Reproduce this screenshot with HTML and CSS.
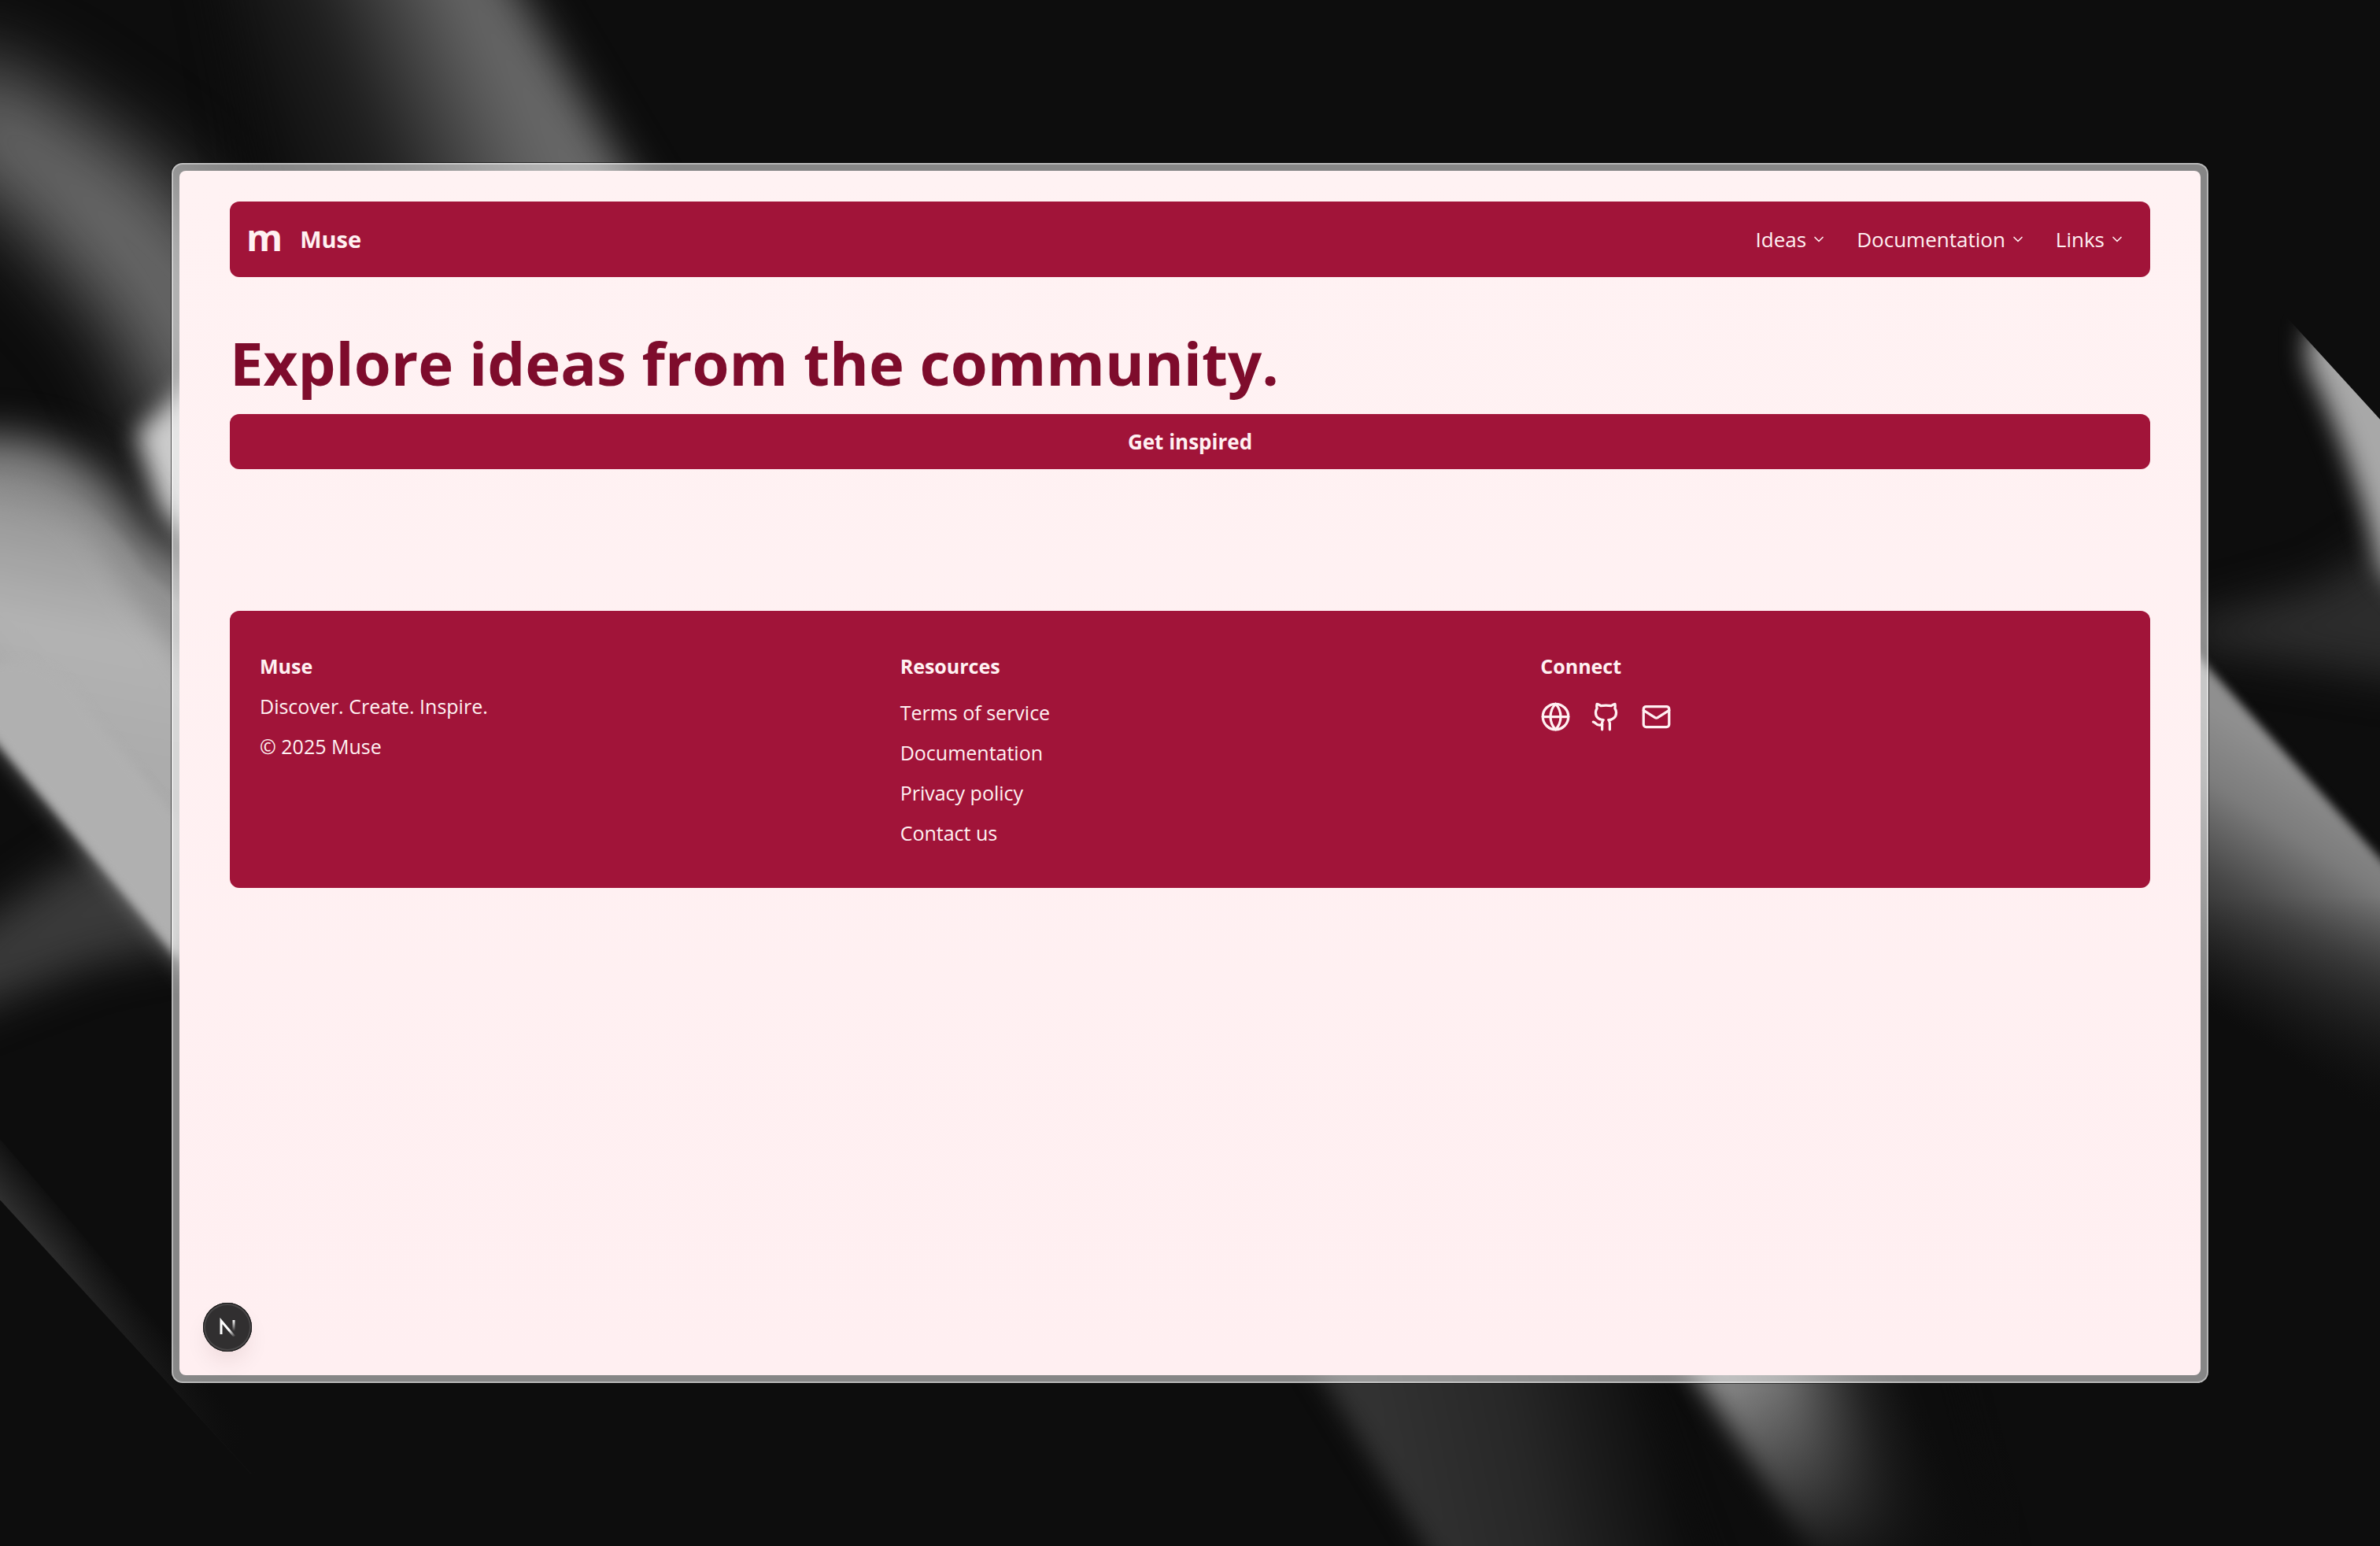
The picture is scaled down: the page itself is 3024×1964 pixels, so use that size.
FILE: index.html
```html
<!DOCTYPE html>
<html lang="en">
<head>
<meta charset="utf-8">
<meta name="viewport" content="width=device-width, initial-scale=1">
<title>Muse</title>
<link rel="stylesheet" href="styles.css">
</head>
<body>
<svg class="backdrop" viewBox="0 0 1568 1018" preserveAspectRatio="none" aria-hidden="true">
  <defs>
    <filter id="b3" x="-50%" y="-50%" width="200%" height="200%" color-interpolation-filters="sRGB"><feGaussianBlur stdDeviation="3"/></filter>
    <filter id="b8" x="-50%" y="-50%" width="200%" height="200%" color-interpolation-filters="sRGB"><feGaussianBlur stdDeviation="8"/></filter>
    <filter id="b14" x="-80%" y="-80%" width="260%" height="260%" color-interpolation-filters="sRGB"><feGaussianBlur stdDeviation="14"/></filter>
    <filter id="b26" x="-80%" y="-80%" width="260%" height="260%" color-interpolation-filters="sRGB"><feGaussianBlur stdDeviation="26"/></filter>
    <clipPath id="rightEdge"><path d="M1495 196 1503 205 1620 333V460H1440V196Z"/></clipPath>
    <linearGradient id="beamB" gradientUnits="userSpaceOnUse" x1="175" y1="110" x2="370" y2="30">
      <stop offset="0" stop-color="#0d0d0d"/><stop offset=".35" stop-color="#202020"/><stop offset=".75" stop-color="#606060"/><stop offset="1" stop-color="#6e6e6e"/>
    </linearGradient>
    <linearGradient id="beamC" gradientUnits="userSpaceOnUse" x1="60" y1="290" x2="0" y2="600">
      <stop offset="0" stop-color="#6a6a6a"/><stop offset=".2" stop-color="#a0a0a0"/><stop offset=".4" stop-color="#bababa"/><stop offset="1" stop-color="#a8a8a8"/>
    </linearGradient>
    <linearGradient id="edgeD" gradientUnits="userSpaceOnUse" x1="40" y1="838" x2="62" y2="820">
      <stop offset="0" stop-color="#2e2e2e"/><stop offset="1" stop-color="#0d0d0d"/>
    </linearGradient>
    <linearGradient id="fadeD" gradientUnits="userSpaceOnUse" x1="30" y1="830" x2="150" y2="960">
      <stop offset="0" stop-color="#0d0d0d" stop-opacity="0"/><stop offset="1" stop-color="#0d0d0d"/>
    </linearGradient>
    <linearGradient id="beamR" gradientUnits="userSpaceOnUse" x1="1510" y1="500" x2="1420" y2="640">
      <stop offset="0" stop-color="#8f8f8f"/><stop offset=".25" stop-color="#7c7c7c"/><stop offset=".55" stop-color="#484848"/><stop offset=".85" stop-color="#202020"/><stop offset="1" stop-color="#0d0d0d"/>
    </linearGradient>
    <linearGradient id="fadeR" gradientUnits="userSpaceOnUse" x1="0" y1="590" x2="0" y2="750">
      <stop offset="0" stop-color="#0d0d0d" stop-opacity="0"/><stop offset="1" stop-color="#0d0d0d"/>
    </linearGradient>
    <linearGradient id="beamF" gradientUnits="userSpaceOnUse" x1="910" y1="980" x2="1100" y2="940">
      <stop offset="0" stop-color="#333"/><stop offset=".5" stop-color="#272727"/><stop offset="1" stop-color="#0d0d0d"/>
    </linearGradient>
    <linearGradient id="beamG" gradientUnits="userSpaceOnUse" x1="1140" y1="935" x2="1250" y2="895">
      <stop offset="0" stop-color="#868686"/><stop offset=".35" stop-color="#6c6c6c"/><stop offset=".75" stop-color="#222"/><stop offset="1" stop-color="#0d0d0d"/>
    </linearGradient>
    <linearGradient id="fadeG" gradientUnits="userSpaceOnUse" x1="0" y1="915" x2="0" y2="1018">
      <stop offset="0" stop-color="#0d0d0d" stop-opacity="0"/><stop offset="1" stop-color="#0d0d0d" stop-opacity=".85"/>
    </linearGradient>
  </defs>
  <rect width="1568" height="1018" fill="#0d0d0d"/>
  <path d="M-40 30 20 55 100 110 170 190V340L120 310 75 215 0 130-40 110Z" fill="#696969" filter="url(#b26)"/>
  <path d="M135-60H308L440 160H175Z" fill="url(#beamB)" filter="url(#b14)"/>
  <path d="M90 285 150 230V390L105 335Z" fill="#ccc" filter="url(#b8)"/>
  <path d="M-30 620 60 560 160 560V615L60 635-30 670Z" fill="#3a3a3a" filter="url(#b14)"/>
  <path d="M-40 292Q50 272 95 350L180 400V640L118 580-40 400Z" fill="#848484" filter="url(#b14)"/>
  <path d="M-40 320Q50 300 95 375L160 430V682L118 631-40 442Z" fill="url(#beamC)" filter="url(#b3)" opacity=".35"/>
  <path d="M-60 335Q30 290 80 385L170 500V694L118 631-60 418Z" fill="url(#beamC)" filter="url(#b8)" opacity=".8"/>
  <path d="M-60 470Q20 400 60 470L118 540V631L-60 418Z" fill="#b0b0b0" filter="url(#b3)"/>
  <path d="M0 750V790L165 970 185 965Z" fill="url(#edgeD)"/>
  <path d="M0 740V790L165 970 200 965Z" fill="url(#fadeD)"/>
  <path d="M1440 410 1530 385 1600 340V450L1440 425Z" fill="#2c2c2c" filter="url(#b14)"/>
  <g clip-path="url(#rightEdge)">
    <path d="M1520 215 1600 230V410L1568 375Q1550 300 1520 240Z" fill="#a8a8a8" filter="url(#b8)"/>
  </g>
  <path d="M1400 378 1450 434 1620 623V780H1400Z" fill="url(#beamR)" filter="url(#b3)"/>
  <path d="M1400 560H1568V800H1400Z" fill="url(#fadeR)"/>
  <path d="M1093 870 1217 1060H1330L1280 870Z" fill="url(#beamG)" filter="url(#b8)"/>
  <path d="M1090 905H1330V1018H1090Z" fill="url(#fadeG)"/>
  <path d="M848 870 965 1060H1140L1070 870Z" fill="url(#beamF)" filter="url(#b8)"/>
</svg>

<div class="window">
  <div class="page">
    <header class="topbar">
      <a class="brand" href="#">
        <span class="brand-mark" aria-hidden="true">m</span>
        <span class="brand-name">Muse</span>
      </a>
      <nav class="menu" aria-label="Main">
        <button class="menu-item" type="button">Ideas
          <svg class="chevron" viewBox="0 0 24 24" aria-hidden="true"><path d="m6 9 6 6 6-6"/></svg></button>
        <button class="menu-item" type="button">Documentation
          <svg class="chevron" viewBox="0 0 24 24" aria-hidden="true"><path d="m6 9 6 6 6-6"/></svg></button>
        <button class="menu-item" type="button">Links
          <svg class="chevron" viewBox="0 0 24 24" aria-hidden="true"><path d="m6 9 6 6 6-6"/></svg></button>
      </nav>
    </header>

    <main class="hero">
      <h1 class="hero-title">Explore ideas from the community.</h1>
      <button class="cta" type="button">Get inspired</button>
    </main>

    <footer class="footer">
      <section class="footer-col">
        <h2 class="footer-title">Muse</h2>
        <p>Discover. Create. Inspire.</p>
        <p>© 2025 Muse</p>
      </section>
      <section class="footer-col">
        <h2 class="footer-title">Resources</h2>
        <ul class="footer-links">
          <li><a href="#">Terms of service</a></li>
          <li><a href="#">Documentation</a></li>
          <li><a href="#">Privacy policy</a></li>
          <li><a href="#">Contact us</a></li>
        </ul>
      </section>
      <section class="footer-col">
        <h2 class="footer-title">Connect</h2>
        <div class="socials">
          <a href="#" aria-label="Website"><svg class="icon" viewBox="0 0 24 24"><circle cx="12" cy="12" r="10"/><path d="M12 2a14.5 14.5 0 0 0 0 20 14.5 14.5 0 0 0 0-20"/><path d="M2 12h20"/></svg></a>
          <a href="#" aria-label="GitHub"><svg class="icon" viewBox="0 0 24 24"><path d="M15 22v-4a4.8 4.8 0 0 0-1-3.5c3 0 6-2 6-5.5.08-1.25-.27-2.48-1-3.5.28-1.15.28-2.35 0-3.5 0 0-1 0-3 1.5-2.64-.5-5.36-.5-8 0C6 2 5 2 5 2c-.3 1.15-.3 2.35 0 3.5A5.403 5.403 0 0 0 4 9c0 3.5 3 5.5 6 5.5-.39.49-.68 1.05-.85 1.65-.17.6-.22 1.23-.15 1.85v4"/><path d="M9 18c-4.51 2-5-2-7-2"/></svg></a>
          <a href="#" aria-label="Email"><svg class="icon" viewBox="0 0 24 24"><rect width="20" height="16" x="2" y="4" rx="2"/><path d="m22 7-8.97 5.7a1.94 1.94 0 0 1-2.06 0L2 7"/></svg></a>
        </div>
      </section>
    </footer>

    <button class="dev-badge" type="button" aria-label="Open developer tools">
      <svg class="dev-logo" viewBox="0 0 24 24" fill="none" aria-hidden="true">
        <defs>
          <linearGradient id="nDiag" gradientUnits="userSpaceOnUse" x1="15" y1="15" x2="22" y2="24"><stop stop-color="#fff"/><stop offset="1" stop-color="#fff" stop-opacity="0"/></linearGradient>
          <linearGradient id="nStem" gradientUnits="userSpaceOnUse" x1="0" y1="3" x2="0" y2="17"><stop stop-color="#fff"/><stop offset="1" stop-color="#fff" stop-opacity="0"/></linearGradient>
        </defs>
        <path d="M4 21V4L21 24" stroke="url(#nDiag)" stroke-width="3"/>
        <path d="M20 3V17" stroke="url(#nStem)" stroke-width="3"/>
      </svg>
    </button>
  </div>
</div>
</body>
</html>
```
FILE: styles.css
```css
:root {
  --rose-50: #fff1f2;
  --rose-800: #a11439;
  --rose-900: #7e0c2c;
  --text: 26px;
  --text-small: 25px;
  --line: 38px;
}

* {
  box-sizing: border-box;
}

body {
  margin: 0;
  min-height: 100vh;
  display: flex;
  padding: 207px 218px;
  background: #0d0d0d;
  color: var(--rose-50);
  font-family: "Open Sans", "Noto Sans", sans-serif;
  font-size: var(--text);
  line-height: var(--line);
}

h1,
h2,
p,
ul {
  margin: 0;
}

a {
  color: inherit;
  text-decoration: none;
}

button {
  border: 0;
  color: inherit;
  font: inherit;
  cursor: pointer;
}

.backdrop {
  position: fixed;
  inset: 0;
  z-index: -1;
  width: 100%;
  height: 100%;
}

/* Translucent frame round the page */
.window {
  flex: 1;
  display: flex;
  padding: 8px;
  border: 2px solid rgba(255, 255, 255, 0.4);
  border-radius: 14px;
  background: rgba(255, 255, 255, 0.5);
  box-shadow: 0 0 0 1px rgba(0, 0, 0, 0.6);
}

.page {
  position: relative;
  flex: 1;
  padding: 39px 64px;
  border-radius: 8px;
  background: linear-gradient(#fff2f3, #ffeff1);
}

.topbar {
  display: flex;
  align-items: center;
  justify-content: space-between;
  height: 96px;
  padding: 0 13px;
  border-radius: 12px;
  background: var(--rose-800);
}

.brand {
  display: flex;
  align-items: center;
  gap: 22px;
  padding-left: 8px;
  font-weight: 700;
}

.brand-mark {
  padding-bottom: 6px;
  font-size: 47px;
}

.brand-name {
  font-size: 29px;
}

.menu {
  display: flex;
}

.menu-item {
  display: flex;
  align-items: center;
  gap: 6px;
  padding: 13px 19px;
  background: none;
}

.chevron {
  width: 20px;
  height: 20px;
  fill: none;
  stroke: currentColor;
  stroke-width: 2;
  stroke-linecap: round;
  stroke-linejoin: round;
}

.hero {
  display: grid;
  gap: 26px;
  padding: 70px 0 180px;
}

.hero-title {
  color: var(--rose-900);
  font-size: 76px;
  font-weight: 700;
  line-height: 78px;
}

.cta {
  padding: 16px;
  border-radius: 12px;
  background: var(--rose-800);
  font-weight: 700;
}

.footer {
  display: grid;
  grid-template-columns: repeat(3, 1fr);
  gap: 77px;
  padding: 51px 38px;
  border-radius: 12px;
  background: var(--rose-800);
  font-size: var(--text-small);
}

.footer-col {
  display: flex;
  flex-direction: column;
  gap: 13px;
}

.footer-title {
  font-size: inherit;
  font-weight: 700;
}

.footer-links {
  display: grid;
  gap: 13px;
  padding: 8px 0 0;
  list-style: none;
}

.socials {
  display: flex;
  gap: 25px;
  padding-top: 13px;
}

.icon {
  display: block;
  width: 39px;
  height: 39px;
  fill: none;
  stroke: currentColor;
  stroke-width: 2;
  stroke-linecap: round;
  stroke-linejoin: round;
}

/* Floating button over the bottom left corner of the page */
.dev-badge {
  position: absolute;
  left: 30px;
  bottom: 30px;
  display: grid;
  place-items: center;
  width: 62px;
  height: 62px;
  padding: 0;
  border-radius: 50%;
  background: #312f30;
  box-shadow: inset 0 0 0 1px #171717, inset 0 0 0 3px #484647, 0 16px 32px -8px rgba(60, 0, 20, 0.12);
}

.dev-logo {
  width: 24px;
  height: 24px;
}
```
